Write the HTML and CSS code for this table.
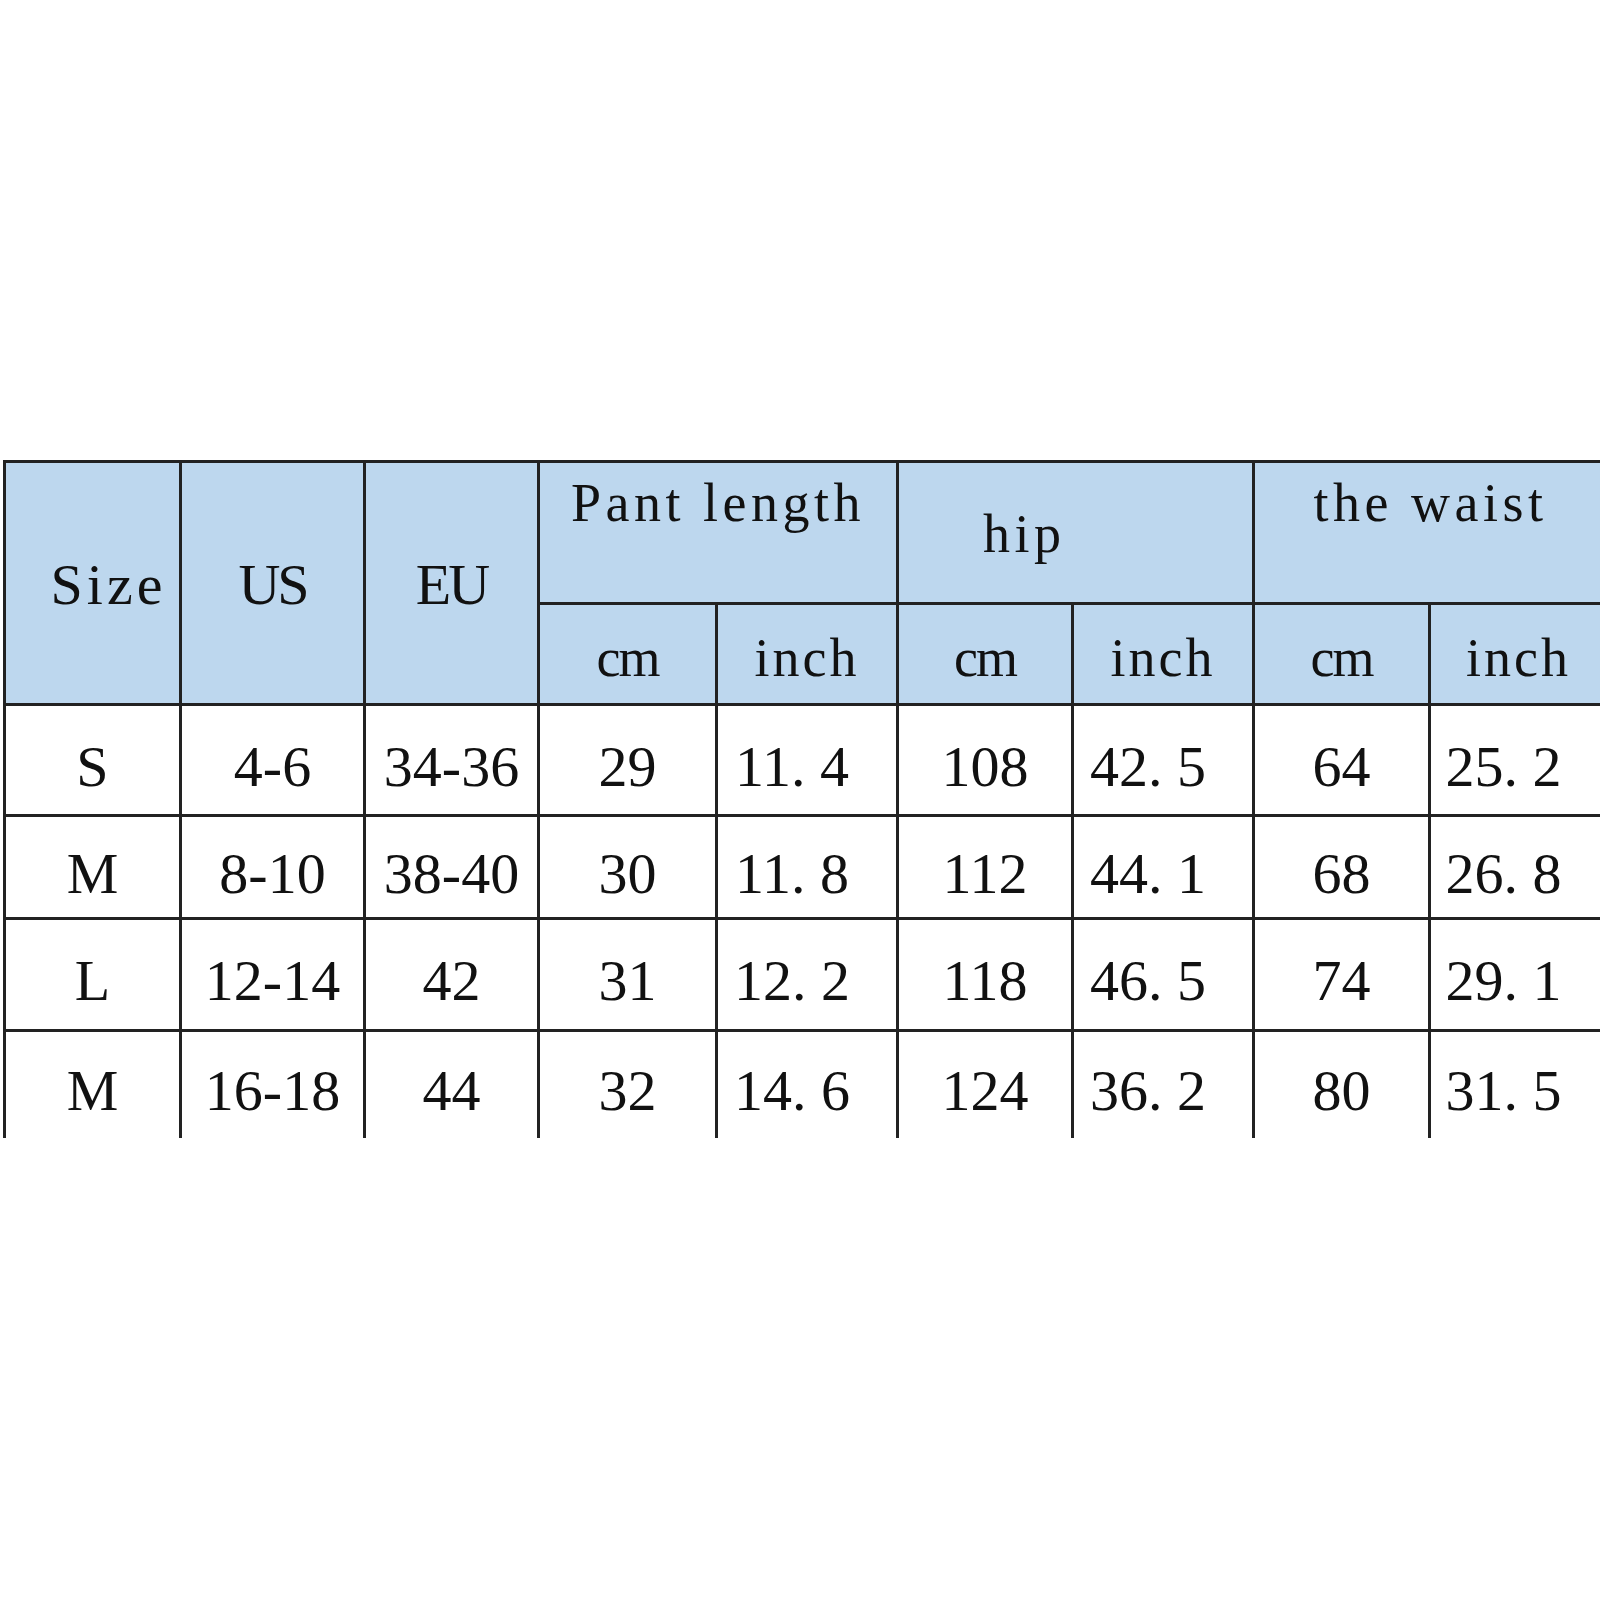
FILE: index.html
```html
<!DOCTYPE html>
<html lang="en">
<head>
<meta charset="utf-8">
<title>Size chart</title>
<link rel="stylesheet" href="styles.css">
</head>
<body>
<div class="sheet">
  <div class="clip">
    <table class="chart">
      <colgroup>
        <col class="c-size"><col class="c-us"><col class="c-eu">
        <col class="c-pcm"><col class="c-pin">
        <col class="c-hcm"><col class="c-hin">
        <col class="c-wcm"><col class="c-win">
      </colgroup>
      <thead>
        <tr class="h1">
          <th rowspan="2" class="lbl size">Size</th>
          <th rowspan="2" class="lbl caps">US</th>
          <th rowspan="2" class="lbl caps">EU</th>
          <th colspan="2" class="grp">Pant length</th>
          <th colspan="2" class="grp hip">hip</th>
          <th colspan="2" class="grp">the waist</th>
        </tr>
        <tr class="h2">
          <th class="unit cm">cm</th><th class="unit">inch</th>
          <th class="unit cm">cm</th><th class="unit">inch</th>
          <th class="unit cm">cm</th><th class="unit">inch</th>
        </tr>
      </thead>
      <tbody>
        <tr class="r1">
          <td>S</td><td>4-6</td><td>34-36</td>
          <td>29</td><td class="dec">11<span class="dot">.</span>4</td>
          <td>108</td><td class="dec">42<span class="dot">.</span>5</td>
          <td>64</td><td class="dec">25<span class="dot">.</span>2</td>
        </tr>
        <tr class="r2">
          <td>M</td><td>8-10</td><td>38-40</td>
          <td>30</td><td class="dec">11<span class="dot">.</span>8</td>
          <td>112</td><td class="dec">44<span class="dot">.</span>1</td>
          <td>68</td><td class="dec">26<span class="dot">.</span>8</td>
        </tr>
        <tr class="r3">
          <td>L</td><td>12-14</td><td>42</td>
          <td>31</td><td class="dec">12<span class="dot">.</span>2</td>
          <td>118</td><td class="dec">46<span class="dot">.</span>5</td>
          <td>74</td><td class="dec">29<span class="dot">.</span>1</td>
        </tr>
        <tr class="r4">
          <td>M</td><td>16-18</td><td>44</td>
          <td>32</td><td class="dec">14<span class="dot">.</span>6</td>
          <td>124</td><td class="dec">36<span class="dot">.</span>2</td>
          <td>80</td><td class="dec">31<span class="dot">.</span>5</td>
        </tr>
      </tbody>
    </table>
  </div>
</div>
</body>
</html>
```

FILE: styles.css
```css
html, body {
  margin: 0;
  padding: 0;
  background: #ffffff;
}

body {
  font-family: "Liberation Serif", "Noto Sans CJK SC", serif;
  color: #111111;
}

.sheet {
  width: 1600px;
  padding-top: 458px;
}

.clip {
  width: 1600px;
  height: 680px;
  overflow: hidden;
  padding: 2px 0 0 3px;
  box-sizing: border-box;
}

.chart {
  border-collapse: collapse;
  table-layout: fixed;
  width: 1603px;
}

.c-size { width: 176px; }
.c-us   { width: 184px; }
.c-eu   { width: 174px; }
.c-pcm  { width: 178px; }
.c-pin  { width: 181px; }
.c-hcm  { width: 175px; }
.c-hin  { width: 181px; }
.c-wcm  { width: 176px; }
.c-win  { width: 178px; }

.chart th,
.chart td {
  border: 3px solid #222222;
  padding: 0;
  font-weight: normal;
  white-space: nowrap;
}

.chart th {
  background: #bdd7ee;
}

/* header */
.chart .h1 { height: 142px; }
.chart .h2 { height: 101px; }

.chart .lbl {
  font-size: 58px;
  line-height: 58px;
  vertical-align: middle;
  text-align: center;
  padding-top: 4px;
}

.chart .size {
  letter-spacing: 4px;
  padding-left: 32px;
}

.chart .caps {
  letter-spacing: -3px;
}

.chart .grp {
  font-size: 54px;
  line-height: 54px;
  letter-spacing: 4.5px;
  vertical-align: top;
  text-align: center;
  padding-top: 13px;
}

.chart .grp.hip {
  text-align: left;
  padding-top: 44px;
  padding-left: 84px;
}

.chart .unit {
  font-size: 54px;
  line-height: 54px;
  letter-spacing: 3px;
  vertical-align: top;
  text-align: center;
  padding-top: 26px;
}

.chart .unit.cm {
  letter-spacing: -2px;
}

/* body rows */
.chart td {
  font-size: 58px;
  line-height: 58px;
  text-align: center;
  vertical-align: middle;
  padding-top: 13px;
}

.chart .r1 { height: 111px; }
.chart .r2 { height: 103px; }
.chart .r3 { height: 112px; }
.chart .r4 { height: 114px; }

.chart .r4 td {
  padding-top: 6px;
}

.chart td.dec {
  padding-right: 30px;
}

.dot {
  padding-right: 0.25em;
}
```
